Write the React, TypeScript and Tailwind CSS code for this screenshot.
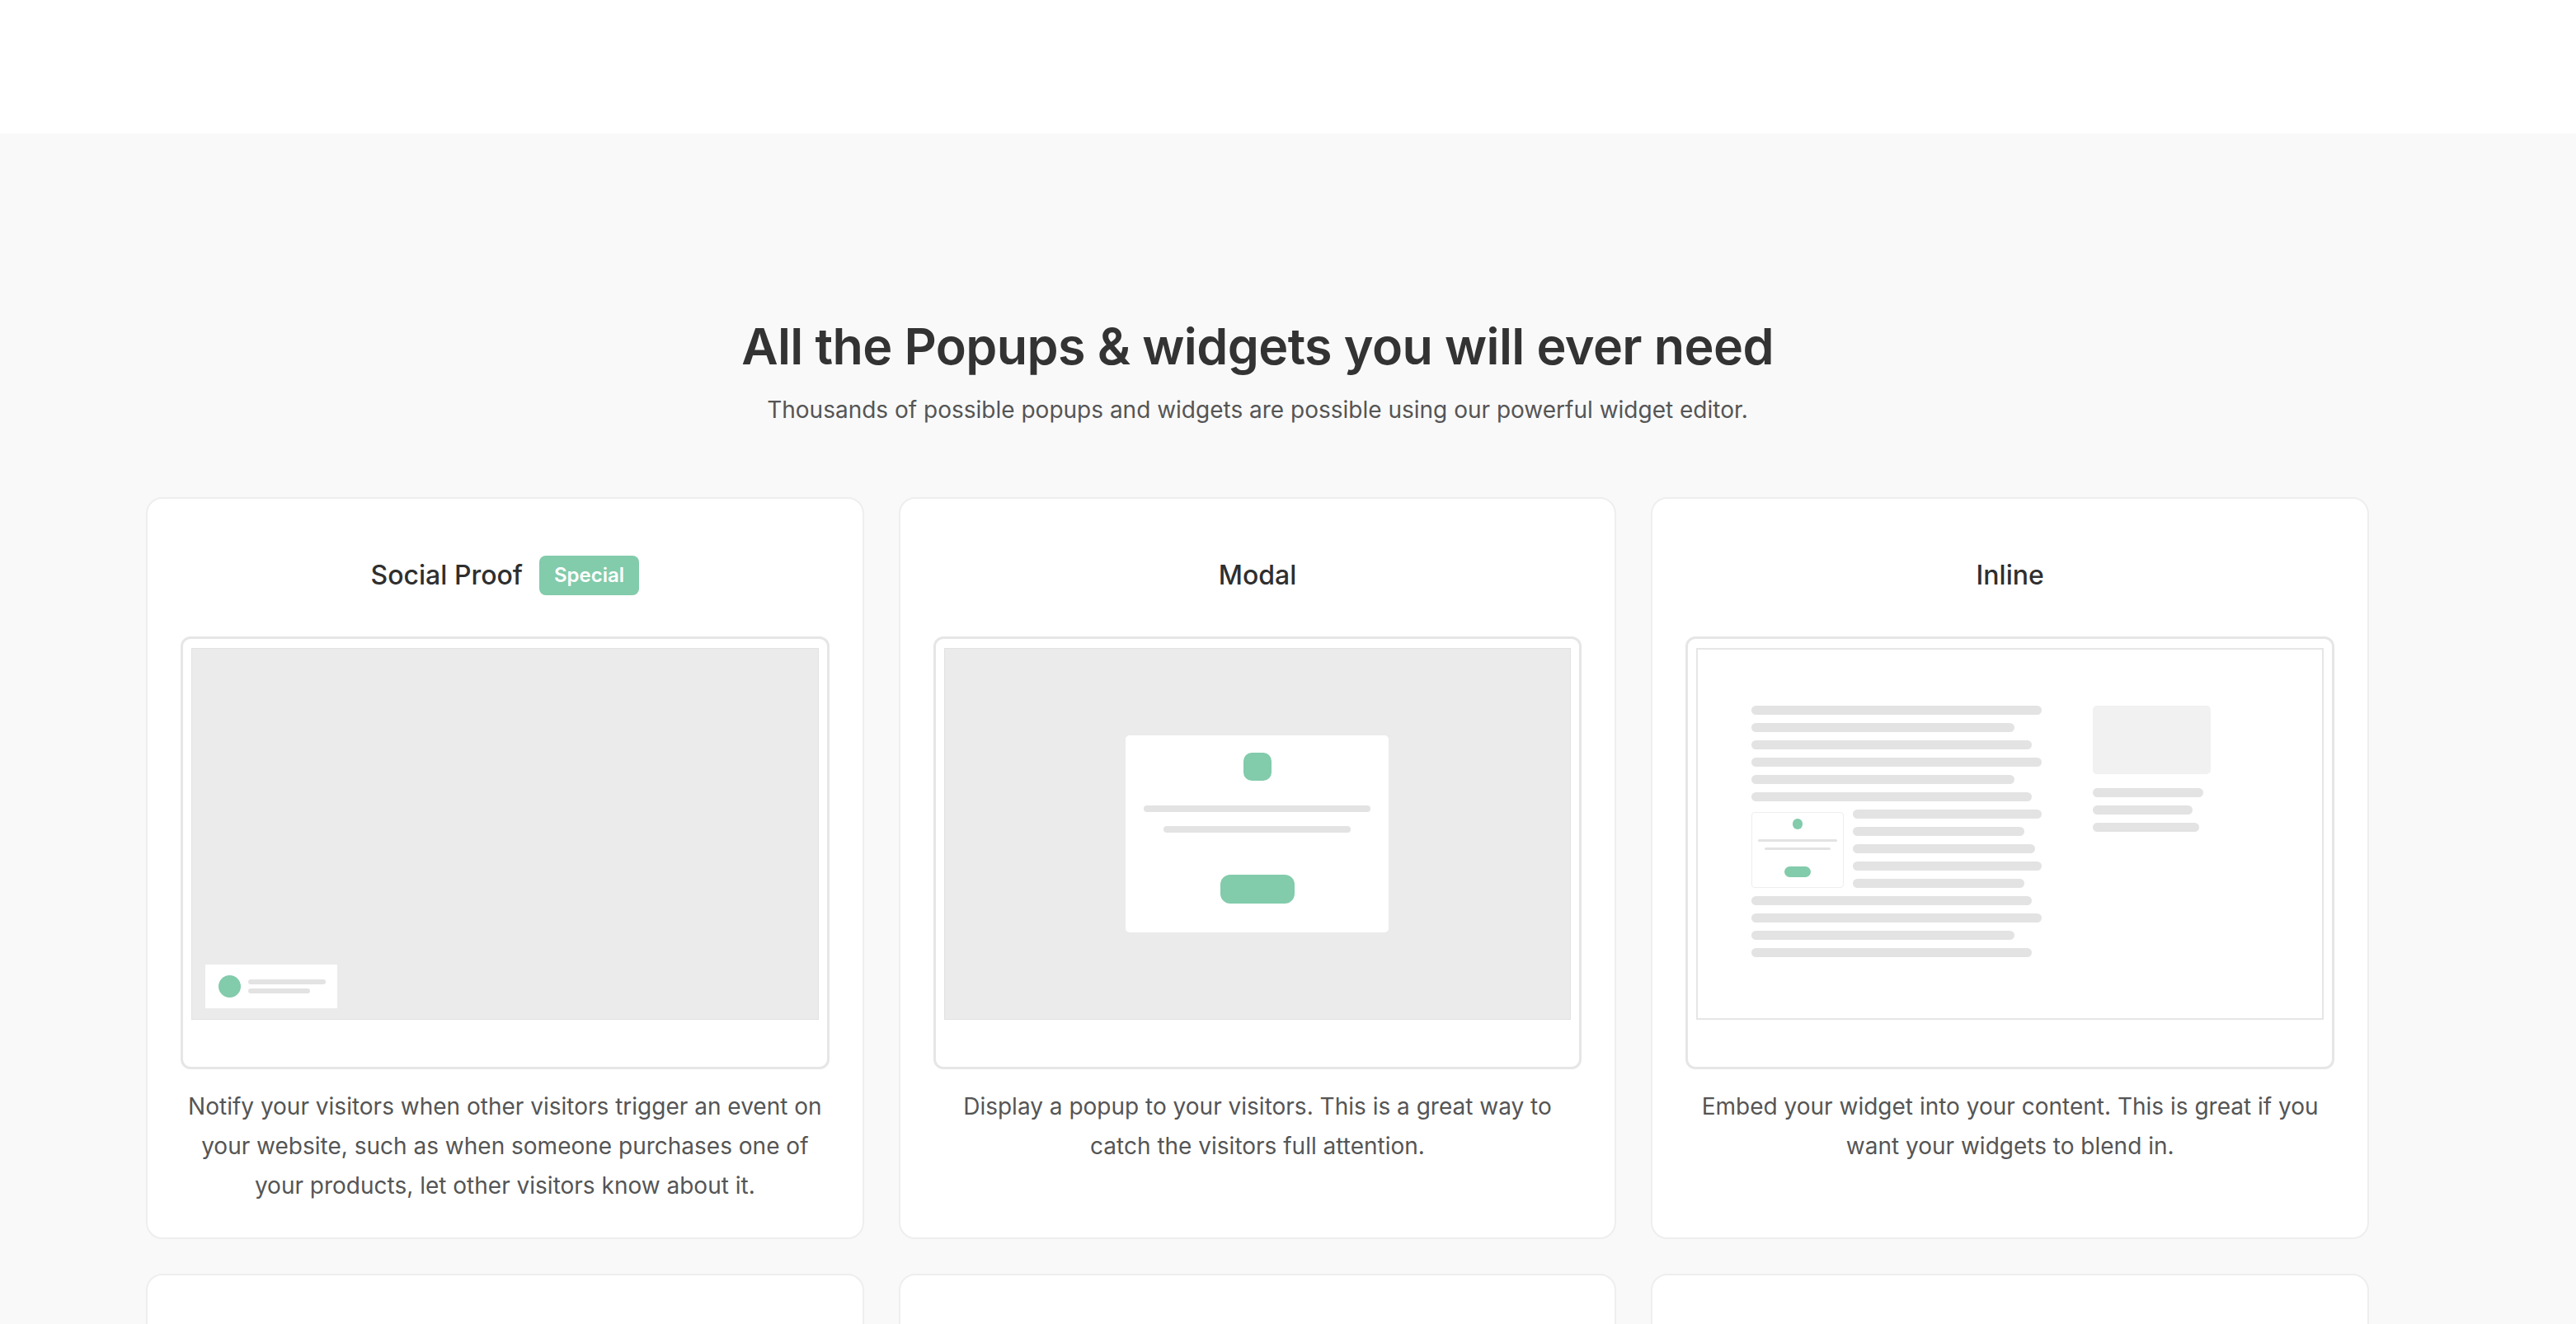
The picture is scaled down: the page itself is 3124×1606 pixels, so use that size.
import React from "react";

const font = { fontFamily: "Inter, 'Noto Sans', sans-serif" };

function Frame({ children, white }: { children: React.ReactNode; white?: boolean }) {
  return (
    <div className="mt-[50px] rounded-[12px] border-[3px] border-[#e6e6e6] bg-white px-[10px] pt-[11px] pb-[57px]">
      <div
        className={
          white
            ? "h-[451px] border-2 border-[#e6e6e6] bg-white"
            : "h-[451px] border border-[#e2e2e2] bg-[#ebebeb]"
        }
      >
        {children}
      </div>
    </div>
  );
}

function SocialProofPreview() {
  return (
    <Frame>
      <div className="flex h-full flex-col justify-end pb-[13px] pl-[16px]">
        <div className="flex h-[53px] w-[160px] items-center gap-[9px] bg-white px-[16px]">
          <div className="h-[27px] w-[27px] shrink-0 rounded-full bg-[#82cbab]" />
          <div className="flex flex-col gap-[5px]">
            <div className="h-[6px] w-[94px] rounded-full bg-[#e3e3e3]" />
            <div className="h-[6px] w-[75px] rounded-full bg-[#e3e3e3]" />
          </div>
        </div>
      </div>
    </Frame>
  );
}

function ModalPreview() {
  return (
    <Frame>
      <div className="flex h-full items-center justify-center">
        <div className="flex h-[239px] w-[319px] flex-col items-center rounded-[5px] bg-white pt-[21px]">
          <div className="h-[34px] w-[34px] rounded-[10px] bg-[#82cbab]" />
          <div className="mt-[30px] h-[8px] w-[275px] rounded-full bg-[#e3e3e3]" />
          <div className="mt-[17px] h-[8px] w-[227px] rounded-full bg-[#e3e3e3]" />
          <div className="mt-[51px] h-[35px] w-[90px] rounded-[12px] bg-[#82cbab]" />
        </div>
      </div>
    </Frame>
  );
}

function Line({ w }: { w: number }) {
  return <div className="h-[11px] rounded-full bg-[#e3e3e3]" style={{ width: w }} />;
}

function InlinePreview() {
  const top = [352, 319, 340, 352, 319, 340];
  const side = [229, 208, 221, 229, 208];
  const bottom = [340, 352, 319, 340];
  return (
    <Frame white>
      <div className="flex gap-[62px] pl-[65px] pt-[68px]">
        <div className="flex w-[352px] flex-col gap-[10px]">
          {top.map((w, i) => (
            <Line key={"t" + i} w={w} />
          ))}
          <div className="flex gap-[11px]">
            <div className="mt-[3px] flex h-[92px] w-[112px] flex-col items-center rounded-[4px] border border-[#eeeeee] pt-[7px]">
              <div className="h-[13px] w-[12px] rounded-full bg-[#82cbab]" />
              <div className="mt-[12px] h-[3px] w-[96px] rounded-full bg-[#e3e3e3]" />
              <div className="mt-[7px] h-[3px] w-[80px] rounded-full bg-[#e3e3e3]" />
              <div className="mt-[20px] h-[13px] w-[32px] rounded-full bg-[#82cbab]" />
            </div>
            <div className="flex flex-col gap-[10px]">
              {side.map((w, i) => (
                <Line key={"s" + i} w={w} />
              ))}
            </div>
          </div>
          {bottom.map((w, i) => (
            <Line key={"b" + i} w={w} />
          ))}
        </div>
        <div className="flex flex-col">
          <div className="h-[83px] w-[143px] rounded-[5px] bg-[#f1f1f1]" />
          <div className="mt-[17px] flex flex-col gap-[10px]">
            <Line w={134} />
            <Line w={121} />
            <Line w={129} />
          </div>
        </div>
      </div>
    </Frame>
  );
}

function Card({
  title,
  badge,
  preview,
  text,
}: {
  title?: string;
  badge?: string;
  preview?: React.ReactNode;
  text?: string;
}) {
  return (
    <div className="flex min-h-[200px] flex-col rounded-[20px] border-2 border-[#eeeeee] bg-white px-[40px] pt-[69px] pb-[39px]">
      {title && (
        <div className="flex h-[48px] items-center justify-center gap-[20px]">
          <span className="text-[32px] font-medium text-[#2f2f2f]">{title}</span>
          {badge && (
            <span className="flex h-[48px] items-center rounded-[8px] bg-[#82cbab] px-[18px] text-[24px] font-semibold text-white">
              {badge}
            </span>
          )}
        </div>
      )}
      {preview}
      {text && <p className="mt-[21px] text-center text-[28px] leading-[48px] text-[#555555]">{text}</p>}
    </div>
  );
}

export default function App() {
  return (
    <div className="min-h-screen bg-[#f9f9f9]" style={font}>
      <header className="h-[162px] bg-white" />
      <section className="w-[3050px]">
        <div className="flex flex-col items-center pt-[228px] pb-[80px]">
          <h1 className="text-[61px] leading-none font-semibold tracking-[-0.6px] text-[#333333]">
            All the Popups &amp; widgets you will ever need
          </h1>
          <p className="mt-[32px] text-[28px] leading-none text-[#555555]">
            Thousands of possible popups and widgets are possible using our powerful widget editor.
          </p>
          <div className="mt-[92px] grid w-[2696px] grid-cols-3 gap-x-[42px] gap-y-[42px]">
            <Card
              title="Social Proof"
              badge="Special"
              preview={<SocialProofPreview />}
              text="Notify your visitors when other visitors trigger an event on your website, such as when someone purchases one of your products, let other visitors know about it."
            />
            <Card
              title="Modal"
              preview={<ModalPreview />}
              text="Display a popup to your visitors. This is a great way to catch the visitors full attention."
            />
            <Card
              title="Inline"
              preview={<InlinePreview />}
              text="Embed your widget into your content. This is great if you want your widgets to blend in."
            />
            <Card />
            <Card />
            <Card />
          </div>
        </div>
      </section>
    </div>
  );
}
